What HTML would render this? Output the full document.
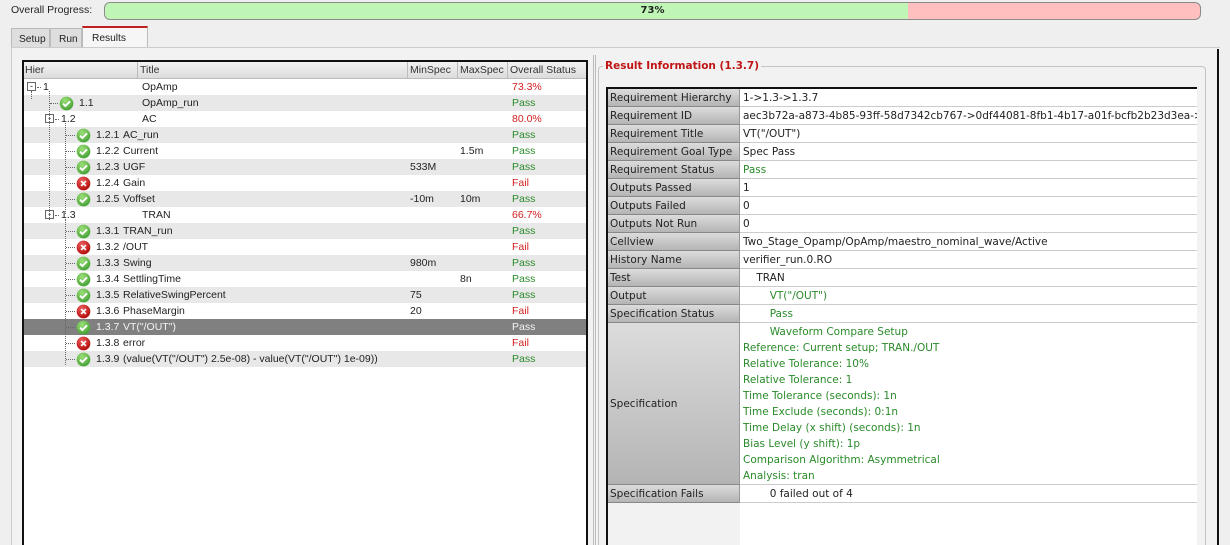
<!DOCTYPE html>
<html><head><meta charset="utf-8"><style>
*{box-sizing:border-box;margin:0;padding:0}
html,body{width:1230px;height:545px;overflow:hidden}
body{background:#efefef;font-family:"DejaVu Sans","Liberation Sans",sans-serif;font-size:10.5px;color:#222;position:relative}
.a{position:absolute;white-space:nowrap}
.L{font-family:"Liberation Sans",sans-serif;font-size:10.2px}
.g{color:#2a8a2a}.r{color:#d42020}
.row{position:absolute;left:0;width:560px;height:16px;line-height:16px}
.ic{position:absolute;width:15px;height:15px;top:1px}
.lab{position:absolute;left:0;width:132px;background:linear-gradient(#dcdcdc,#b4b4b4);border-bottom:1px solid #888;border-right:1px solid #999;padding-left:2px}
.val{position:absolute;left:132px;right:0;border-bottom:1px solid #ccc;padding-left:3px;background:#fff}
</style></head><body>
<div class="a L" style="left:11px;top:4px;font-size:10.5px">Overall Progress:</div>
<div class="a" style="left:104px;top:2px;width:1097px;height:18px;border:1px solid #8a8a8a;border-radius:6px;background:#ffbfbf;overflow:hidden">
 <div style="width:803px;height:100%;background:#bff5b5"></div>
 <div class="a" style="left:0;width:100%;top:2px;text-align:center;font-weight:bold;font-size:10px">73%</div>
</div>
<div class="a L" style="left:11px;top:28px;width:39px;height:20px;border:1px solid #bbb;background:#dedede;padding:5px 0 0 7px">Setup</div>
<div class="a L" style="left:50px;top:28px;width:32px;height:20px;border:1px solid #bbb;background:#dedede;padding:5px 0 0 8px">Run</div>
<div class="a L" style="left:82px;top:26px;width:66px;height:22px;border:1px solid #bbb;border-top:2px solid #c02020;border-bottom:none;background:#f6f6f6;padding:5px 0 0 9px">Results</div>
<div class="a" style="left:11px;top:47px;width:1209px;height:498px;border-top:1px solid #ccc;border-left:1px solid #ccc;background:#f2f2f2"></div>
<div class="a" style="left:1217px;top:49px;width:2px;height:496px;background:#111"></div>
<div class="a L" style="left:22px;top:60px;width:566px;height:485px;border:2px solid #111;border-bottom:none;background:#fff;overflow:hidden;font-size:10.5px">
 <div class="row" style="top:0;height:17px;width:562px;background:linear-gradient(#f2f2f2,#dcdcdc);border-bottom:1px solid #bbb;color:#333">
  <span class="a" style="left:1px">Hier</span><span class="a" style="left:113px;border-left:1px solid #bbb;padding-left:2px;height:16px">Title</span>
  <span class="a" style="left:383px;border-left:1px solid #bbb;padding-left:2px;height:16px">MinSpec</span>
  <span class="a" style="left:433px;border-left:1px solid #bbb;padding-left:2px;height:16px">MaxSpec</span>
  <span class="a" style="left:483px;border-left:1px solid #bbb;padding-left:2px;height:16px">Overall Status</span>
 </div>
 <div id="rows"></div>
</div>
<div class="a" style="left:593px;top:55px;width:3px;height:490px;border-left:1px solid #bbb;border-right:1px solid #bbb"></div>
<div class="a" style="left:598px;top:66px;width:608px;height:490px;border:1px solid #c4c4c4;border-radius:4px"></div>
<div class="a" style="left:603px;top:60px;background:#f2f2f2;padding:0 2px;color:#c01515;font-weight:bold;font-size:10.5px">Result Information (1.3.7)</div>
<div class="a" style="left:606px;top:87px;width:591px;height:458px;border-top:2px solid #111;border-left:2px solid #111;background:#fff;overflow:hidden" id="rt">
 <div class="a" style="left:0;top:412px;width:132px;height:60px;background:#f2f2f2"></div>
</div>
<script>
var R=[
[0,'1','OpAmp','','','73.3%','r',null],
[1,'1.1','OpAmp_run','','','Pass','g','p'],
[1,'1.2','AC','','','80.0%','r',null],
[2,'1.2.1','AC_run','','','Pass','g','p'],
[2,'1.2.2','Current','','1.5m','Pass','g','p'],
[2,'1.2.3','UGF','533M','','Pass','g','p'],
[2,'1.2.4','Gain','','','Fail','r','f'],
[2,'1.2.5','Voffset','-10m','10m','Pass','g','p'],
[1,'1.3','TRAN','','','66.7%','r',null],
[2,'1.3.1','TRAN_run','','','Pass','g','p'],
[2,'1.3.2','/OUT','','','Fail','r','f'],
[2,'1.3.3','Swing','980m','','Pass','g','p'],
[2,'1.3.4','SettlingTime','','8n','Pass','g','p'],
[2,'1.3.5','RelativeSwingPercent','75','','Pass','g','p'],
[2,'1.3.6','PhaseMargin','20','','Fail','r','f'],
[2,'1.3.7','VT("/OUT")','','','Pass','g','p'],
[2,'1.3.8','error','','','Fail','r','f'],
[2,'1.3.9','(value(VT("/OUT") 2.5e-08) - value(VT("/OUT") 1e-09))','','','Pass','g','p']];
var P='<svg class="ic" viewBox="0 0 16 16"><defs><radialGradient id="gg" cx=".4" cy=".3" r=".8"><stop offset="0" stop-color="#9be07a"/><stop offset="1" stop-color="#3c9a2a"/></radialGradient></defs><circle cx="8" cy="8" r="7.3" fill="url(#gg)"/><path d="M4.3 8.2l2.5 2.5 5-5" stroke="#fff" stroke-width="2" fill="none"/></svg>';
var F='<svg class="ic" viewBox="0 0 16 16"><defs><radialGradient id="rg" cx=".4" cy=".3" r=".8"><stop offset="0" stop-color="#f06060"/><stop offset="1" stop-color="#a00"/></radialGradient></defs><circle cx="8" cy="8" r="7.3" fill="url(#rg)"/><path d="M5.5 5.5l5 5M10.5 5.5l-5 5" stroke="#fff" stroke-width="1.8"/></svg>';
var h='';
R.forEach(function(r,i){
 var y=17+16*i,sel=i==15,bg=sel?'#808080':(i%2?'#e8e8e8':'#fff'),c=sel?'color:#f4f4f4':'';
 h+='<div class="row" style="top:'+y+'px;width:562px;background:'+bg+';'+c+'">';
 var lv=r[0];
 if(r[7]==null){var bx=lv==0?3:21;h+='<span class="a" style="left:'+bx+'px;top:3px;width:9px;height:9px;border:1px solid #666;background:#fff;font-size:9px;line-height:6px;text-align:center">-</span><span class="a" style="left:'+(bx+10)+'px;top:8px;width:4px;border-top:1px dotted #666"></span><span class="a" style="left:'+(bx+16)+'px">'+r[1]+'</span>';}
 else{var lx=lv==1?25:41,ix=lv==1?35:52;h+='<span class="a" style="left:'+(lx+1)+'px;top:8px;width:'+(ix-lx-2)+'px;border-top:1px dotted #666"></span>'+(r[7]=='p'?P:F).replace('class="ic"','class="ic" style="left:'+ix+'px"')+'<span class="a" style="left:'+(ix+20)+'px">'+r[1]+'</span>';}
 h+='<span class="a" style="left:'+(lv==2?'99px':'118px')+'">'+r[2]+'</span>';
 h+='<span class="a" style="left:386px">'+r[3]+'</span><span class="a" style="left:436px">'+r[4]+'</span>';
 h+='<span class="a '+(sel?'':r[6])+'" style="left:488px">'+r[5]+'</span></div>';
});
h+='<span class="a" style="left:7px;top:29px;height:8px;border-left:1px dotted #666"></span>';
h+='<span class="a" style="left:25px;top:29px;height:129px;border-left:1px dotted #666"></span>';
h+='<span class="a" style="left:41px;top:61px;height:91px;border-left:1px dotted #666"></span>';
h+='<span class="a" style="left:41px;top:157px;height:146px;border-left:1px dotted #666"></span>';
document.getElementById('rows').innerHTML=h;
var T=[['Requirement Hierarchy','1-&gt;1.3-&gt;1.3.7',''],['Requirement ID','aec3b72a-a873-4b85-93ff-58d7342cb767-&gt;0df44081-8fb1-4b17-a01f-bcfb2b23d3ea-&gt;fc7d',''],['Requirement Title','VT("/OUT")',''],['Requirement Goal Type','Spec Pass',''],['Requirement Status','Pass','g'],['Outputs Passed','1',''],['Outputs Failed','0',''],['Outputs Not Run','0',''],['Cellview','Two_Stage_Opamp/OpAmp/maestro_nominal_wave/Active',''],['History Name','verifier_run.0.RO',''],['Test','&nbsp;&nbsp;&nbsp;&nbsp;TRAN',''],['Output','&nbsp;&nbsp;&nbsp;&nbsp;&nbsp;&nbsp;&nbsp;&nbsp;VT("/OUT")','g'],['Specification Status','&nbsp;&nbsp;&nbsp;&nbsp;&nbsp;&nbsp;&nbsp;&nbsp;Pass','g']];
var s='',y=0;
T.forEach(function(t){s+='<div class="lab a" style="top:'+y+'px;height:18px;line-height:18px">'+t[0]+'</div><div class="val a '+t[2]+'" style="top:'+y+'px;height:18px;line-height:18px">'+t[1]+'</div>';y+=18;});
var sp=['&nbsp;&nbsp;&nbsp;&nbsp;&nbsp;&nbsp;&nbsp;&nbsp;Waveform Compare Setup','Reference: Current setup; TRAN./OUT','Relative Tolerance: 10%','Relative Tolerance: 1','Time Tolerance (seconds): 1n','Time Exclude (seconds): 0:1n','Time Delay (x shift) (seconds): 1n','Bias Level (y shift): 1p','Comparison Algorithm: Asymmetrical','Analysis: tran'];
s+='<div class="lab a" style="top:'+y+'px;height:162px;line-height:162px">Specification</div><div class="val a g" style="top:'+y+'px;height:162px;padding-top:1px;line-height:16px">'+sp.join('<br>')+'</div>';y+=162;
s+='<div class="lab a" style="top:'+y+'px;height:18px;line-height:18px">Specification Fails</div><div class="val a" style="top:'+y+'px;height:18px;line-height:18px">&nbsp;&nbsp;&nbsp;&nbsp;&nbsp;&nbsp;&nbsp;&nbsp;0 failed out of 4</div>';
document.getElementById('rt').insertAdjacentHTML('beforeend',s);
</script>
</body></html>
